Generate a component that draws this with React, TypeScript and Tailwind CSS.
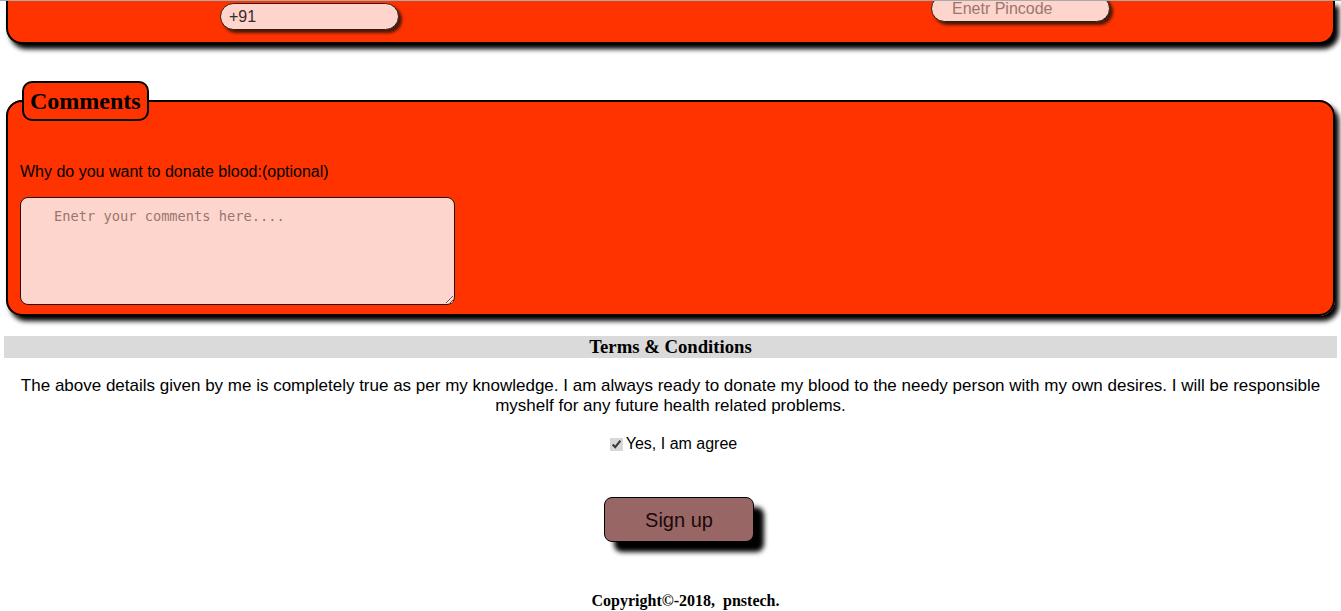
export default function App() {
  return (
    <div className="min-h-screen bg-white px-1 font-['Liberation_Sans',Arial,sans-serif] text-black">
      {/* tail end of the contact fieldset that sits above the fold */}
      <div className="relative -mx-1 h-px bg-[#a9a9a9]" />
      <div className="mx-[2px] flex h-[43px] items-start rounded-b-[16px] border-2 border-t-0 border-black bg-[#ff3300] shadow-[4px_5px_5px_#000]">
        <input
          defaultValue="+91"
          className="ml-[212px] mt-[2px] h-[27px] w-[179px] rounded-[14px] border border-[#3a1a10] bg-[#fed5cc] px-2 text-base text-[#3a2a26] shadow-[3px_3px_3px_#4a1a0a] outline-none"
        />
        <input
          placeholder="Enetr Pincode"
          className="-mt-[6px] ml-[532px] h-[27px] w-[179px] rounded-[14px] border border-[#3a1a10] bg-[#fed5cc] px-5 text-base shadow-[3px_3px_3px_#4a1a0a] outline-none placeholder:text-[#9a7670]"
        />
      </div>

      <fieldset className="mx-[2px] mt-[37px] rounded-[16px] border-2 border-black bg-[#ff3300] px-3 pb-[9px] shadow-[4px_5px_5px_#000]">
        <legend className="ml-[2px] rounded-[10px] border-2 border-black bg-[#ff3300] px-[6px] py-[3px] font-['Liberation_Serif','Times_New_Roman',serif] text-[24px] leading-[30px] font-bold">
          Comments
        </legend>
        <p className="mt-[41px] text-base leading-5">Why do you want to donate blood:(optional)</p>
        <textarea
          placeholder="Enetr your comments here...."
          className="mt-[15px] block h-[108px] w-[435px] rounded-[8px] border border-[#2a1008] bg-[#fed5cc] py-[8px] pl-[33px] font-['DejaVu_Sans_Mono',monospace] text-[13.7px] outline-none placeholder:text-[#9a7670]"
        />
      </fieldset>

      <div className="mt-[20px] bg-[#dadada] text-center font-['Liberation_Serif','Times_New_Roman',serif] text-[18.72px] leading-[22px] font-bold">
        Terms &amp; Conditions
      </div>

      <p className="mx-auto mt-[18px] max-w-[1320px] text-center text-[17px] leading-5">
        The above details given by me is completely true as per my knowledge. I am always ready to donate my blood to the needy
        person with my own desires. I will be responsible myshelf for any future health related problems.
      </p>

      <label className="mt-[18px] flex items-center justify-center gap-[3px] text-base leading-5">
        <input type="checkbox" defaultChecked className="ml-[6px] h-[13px] w-[13px] accent-[#d8d8d8]" />
        Yes, I am agree
      </label>

      <div className="mt-[43px] flex justify-center">
        <button className="ml-[17px] h-[45px] w-[150px] rounded-[8px] border border-black bg-[#996666] text-[20px] text-[#1a0a0a] shadow-[10px_10px_5px_#000]">
          Sign up
        </button>
      </div>

      <p className="mt-[49px] pb-2 pl-[30px] text-center font-['Liberation_Serif','Times_New_Roman',serif] text-[16px] leading-5 font-bold">
        Copyright©-2018,&nbsp; pnstech.
      </p>
    </div>
  );
}
